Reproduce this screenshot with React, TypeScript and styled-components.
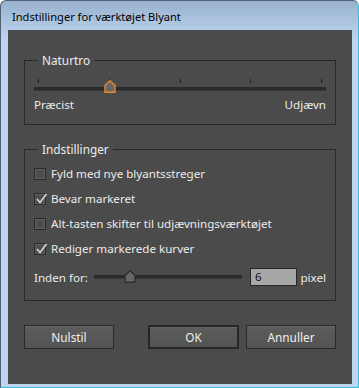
import React from 'react'
import styled, { createGlobalStyle } from 'styled-components'

const GlobalStyle = createGlobalStyle`
  html, body {
    margin: 0;
    padding: 0;
    background: #ffffff;
  }
  * {
    box-sizing: border-box;
  }
`

const FONT = `"Noto Sans", "Open Sans", Arial, sans-serif`

const Window = styled.div`
  width: 359px;
  height: 388px;
  display: flex;
  flex-direction: column;
  border: 1px solid #4f6175;
  border-right-color: #3fbfd6;
  border-bottom-color: #3fbfd6;
  border-radius: 6px 6px 0 0;
  background: linear-gradient(to bottom, #97b1cf 0px, #b3cbe6 28px, #bdd5ee 40px, #bdd5ee 100%);
  padding: 0 6px 3px 7px;
  font-family: ${FONT};
`

const TitleBar = styled.div`
  height: 29px;
  display: flex;
  align-items: center;
  padding: 1px 0 0 4px;
  font-size: 11.1px;
  color: #000000;
`

const Panel = styled.div`
  flex: 1;
  background: #4b4b4b;
  padding: 23px 16px 0 16px;
  display: flex;
  flex-direction: column;
  color: #e6e6e6;
  font-size: 11.6px;
`

const Group = styled.fieldset<{ $gap?: number }>`
  margin: ${(p) => p.$gap ?? 0}px 0 0 0;
  padding: 0 9px;
  border: 1px solid #2a2a2a;
  min-width: 0;
`

const Legend = styled.legend`
  padding: 0 4px;
  margin-left: 4px;
  height: 14px;
  line-height: 14px;
  font-size: 11.8px;
  color: #ececec;
`

const SliderBlock = styled.div`
  padding: 12px 0 12px 0;
`

const Ticks = styled.div`
  display: flex;
  justify-content: space-between;
  padding: 0 4px 0 4px;
  height: 4px;
`

const Tick = styled.span`
  width: 1px;
  height: 4px;
  background: #1f1f1f;
`

const Track = styled.div<{ $h: number }>`
  position: relative;
  height: ${(p) => p.$h}px;
  background: #2b2b2b;
  border-bottom: 1px solid #3a3a3a;
`

const ThumbSvg = styled.svg`
  position: absolute;
  display: block;
`

const EndLabels = styled.div`
  display: flex;
  justify-content: space-between;
  margin-top: 7px;
  height: 14px;
  line-height: 14px;
  color: #ececec;
`

const Rows = styled.div`
  padding: 5px 0 12px 0;
  display: flex;
  flex-direction: column;
`

const CheckRow = styled.label`
  height: 25px;
  display: flex;
  align-items: center;
  gap: 5px;
  color: #ececec;
`

const Box = styled.span`
  position: relative;
  width: 12px;
  height: 12px;
  flex: none;
  border: 1px solid #2c2c2c;
  background: #4e4e4e;
  box-shadow: inset 0 0 0 1px #5e5e5e;
`

const CheckSvg = styled.svg`
  position: absolute;
  left: 0px;
  top: -2px;
`

const RangeRow = styled.div`
  margin-top: 5px;
  height: 22px;
  display: flex;
  align-items: center;
  color: #ececec;
`

const RangeLabel = styled.span`
  width: 60px;
  flex: none;
`

const SmallSlider = styled.div`
  width: 148px;
  flex: none;
  position: relative;
`

const NumberBox = styled.div`
  margin-left: 8px;
  width: 49px;
  height: 18px;
  border: 1px solid #262626;
  background: #a7a7a7;
  color: #111111;
  padding-left: 4px;
  line-height: 16px;
`

const Unit = styled.span`
  margin-left: 3px;
`

const ButtonRow = styled.div`
  margin-top: 24px;
  display: flex;
  gap: 7px;
`

const Button = styled.button<{ $default?: boolean; $w: number }>`
  width: ${(p) => p.$w}px;
  height: 24px;
  font-family: ${FONT};
  font-size: 11.8px;
  color: #efefef;
  background: linear-gradient(to bottom, #5c5c5c, #545454);
  border: ${(p) => (p.$default ? '2px solid #262626' : '1px solid #2a2a2a')};
  box-shadow: inset 0 1px 0 #666666;
  padding: 0;
  &:first-child {
    margin-right: auto;
  }
`

function Thumb({ left, top, accent }: { left: number; top: number; accent: string }) {
  return (
    <ThumbSvg width="12" height="13" viewBox="0 0 12 13" style={{ left, top }}>
      <path d="M6 0.8 L11 5.5 V12.2 H1 V5.5 Z" fill="#676767" stroke={accent} strokeWidth="1.4" />
    </ThumbSvg>
  )
}

function Check({ checked, label }: { checked?: boolean; label: string }) {
  return (
    <CheckRow>
      <Box>
        {checked && (
          <CheckSvg width="13" height="13" viewBox="0 0 13 13">
            <path d="M2 7 L5 10.5 L11.5 2" fill="none" stroke="#d6d6d6" strokeWidth="1.6" />
          </CheckSvg>
        )}
      </Box>
      {label}
    </CheckRow>
  )
}

export default function App() {
  return (
    <>
      <GlobalStyle />
      <Window>
        <TitleBar>Indstillinger for værktøjet Blyant</TitleBar>
        <Panel>
          <Group>
            <Legend>Naturtro</Legend>
            <SliderBlock>
              <Ticks>
                {[0, 1, 2, 3, 4].map((i) => (
                  <Tick key={i} />
                ))}
              </Ticks>
              <Track $h={4} style={{ marginTop: 4 }}>
                <Thumb left={70} top={-7} accent="#ea8a2a" />
              </Track>
              <EndLabels>
                <span>Præcist</span>
                <span>Udjævn</span>
              </EndLabels>
            </SliderBlock>
          </Group>
          <Group $gap={17}>
            <Legend>Indstillinger</Legend>
            <Rows>
              <Check label="Fyld med nye blyantsstreger" />
              <Check checked label="Bevar markeret" />
              <Check label="Alt-tasten skifter til udjævningsværktøjet" />
              <Check checked label="Rediger markerede kurver" />
              <RangeRow>
                <RangeLabel>Inden for:</RangeLabel>
                <SmallSlider>
                  <Track $h={4}>
                    <Thumb left={30} top={-5} accent="#2e2e2e" />
                  </Track>
                </SmallSlider>
                <NumberBox>6</NumberBox>
                <Unit>pixel</Unit>
              </RangeRow>
            </Rows>
          </Group>
          <ButtonRow>
            <Button $w={90}>Nulstil</Button>
            <Button $w={91} $default>
              OK
            </Button>
            <Button $w={90}>Annuller</Button>
          </ButtonRow>
        </Panel>
      </Window>
    </>
  )
}
